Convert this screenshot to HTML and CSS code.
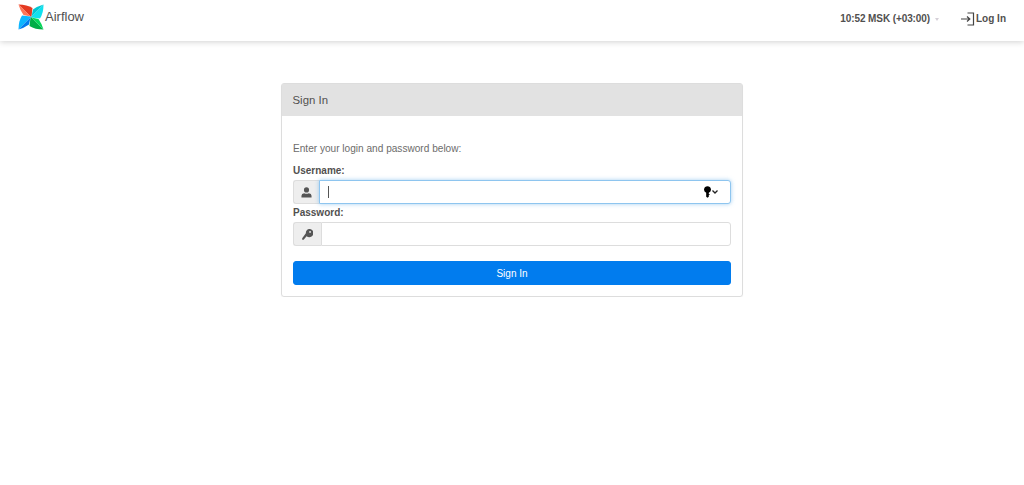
FILE: index.html
```html
<!DOCTYPE html>
<html lang="en">
<head>
    <meta charset="UTF-8">
    <meta name="viewport" content="width=device-width, initial-scale=1.0">
    <title>Airflow - Sign In</title>
    <link rel="stylesheet" href="styles.css">
</head>
<body>
    <nav class="navbar">
        <a class="brand" href="#">
            <svg class="brand-logo" viewBox="0 0 26 26" width="26" height="26">
                <g>
                    <path fill="#e43921" d="M13 13 L0.500 0.500 Q9 0.500 14.500 4 L13.500 12.500 Z"/>
                    <path fill="#ff7557" d="M12.500 12.500 L5.500 11 Q2 6 0.500 0.500 Z"/>
                </g>
                <g transform="rotate(90 13 13)">
                    <path fill="#11e1ee" d="M13 13 L0.500 0.500 Q9 0.500 14.500 4 L13.500 12.500 Z"/>
                    <path fill="#00c7d4" d="M12.500 12.500 L5.500 11 Q2 6 0.500 0.500 Z"/>
                </g>
                <g transform="rotate(180 13 13)">
                    <path fill="#00ad46" d="M13 13 L0.500 0.500 Q9 0.500 14.500 4 L13.500 12.500 Z"/>
                    <path fill="#04d659" d="M12.500 12.500 L5.500 11 Q2 6 0.500 0.500 Z"/>
                </g>
                <g transform="rotate(270 13 13)">
                    <path fill="#0cb6ff" d="M13 13 L0.500 0.500 Q9 0.500 14.500 4 L13.500 12.500 Z"/>
                    <path fill="#017cee" d="M12.500 12.500 L5.500 11 Q2 6 0.500 0.500 Z"/>
                </g>
            </svg>
            <span class="brand-name">Airflow</span>
        </a>
        <div class="nav-right">
            <span class="clock">10:52 MSK (+03:00)</span>
            <span class="caret-down"></span>
            <a class="login-link" href="#">
                <svg viewBox="0 0 14 14" width="14" height="14" fill="none" stroke="#444" stroke-width="1.2">
                    <path d="M0 7 H8.500 M6 4.500 L8.800 7 L6 9.500"/>
                    <path d="M6.500 1 H12.500 V13 H6.500"/>
                </svg>
                <span>Log In</span>
            </a>
        </div>
    </nav>

    <main class="container">
        <section class="panel">
            <div class="panel-heading">Sign In</div>
            <form class="panel-body">
                <p class="intro">Enter your login and password below:</p>
                <label class="field-label" for="username">Username:</label>
                <div class="input-group">
                    <span class="addon">
                        <svg viewBox="0 0 12 12" width="11" height="11" fill="#555">
                            <circle cx="6" cy="3.200" r="2.800"/>
                            <path d="M0.500 11.500 V9.500 Q0.500 7.200 3.500 6.800 Q6 8 8.500 6.800 Q11.500 7.200 11.500 9.500 V11.500 Z"/>
                        </svg>
                    </span>
                    <input class="text-input focused" type="text" id="username">
                    <span class="text-caret"></span>
                    <span class="key-hint">
                        <svg viewBox="0 0 8 13" width="7" height="12" fill="#000">
                            <path d="M4 0 A4 3.800 0 0 1 5.500 7.300 V9 H6.500 V10 H5.500 V12 L4 13 L2.500 12 V7.300 A4 3.800 0 0 1 4 0 Z"/>
                        </svg>
                        <svg viewBox="0 0 6 4" width="6" height="4" fill="none" stroke="#222" stroke-width="1.300">
                            <path d="M0.500 0.500 L3 3 L5.500 0.500"/>
                        </svg>
                    </span>
                </div>
                <label class="field-label" for="password">Password:</label>
                <div class="input-group">
                    <span class="addon addon-wide">
                        <svg viewBox="0 0 12 12" width="11" height="11" fill="#555">
                            <path d="M7.500 0 A4.500 4.500 0 1 1 5 7.800 L1.800 11.800 L0.200 11.800 L0.200 10 L4.200 4.500 A4.500 4.500 0 0 1 7.500 0 Z"/>
                            <circle cx="8.800" cy="3.200" r="1" fill="#eee"/>
                        </svg>
                    </span>
                    <input class="text-input" type="password" id="password">
                </div>
                <button class="btn-primary" type="button">Sign In</button>
            </form>
        </section>
    </main>
</body>
</html>
```

FILE: styles.css
```css
body {
    margin: 0;
    font-family: "Liberation Sans", Arial, sans-serif;
    font-size: 10px;
    color: #51504f;
    background: #fff;
}

a {
    color: inherit;
    text-decoration: none;
}

.navbar {
    height: 41px;
    box-sizing: border-box;
    padding: 4px 18px 0 18px;
    display: flex;
    justify-content: space-between;
    background: #fff;
    box-shadow: 0 1px 6px rgba(0, 0, 0, 0.18);
}

.brand {
    display: flex;
    align-items: flex-start;
    gap: 1px;
}

.brand-logo {
    display: block;
}

.brand-name {
    font-size: 13px;
    line-height: 26px;
    color: #51504f;
}

.nav-right {
    display: flex;
    align-items: center;
    height: 29px;
    font-weight: bold;
    font-size: 10px;
    color: #51504f;
}

.clock {
    margin-right: 5px;
    letter-spacing: -0.1px;
}

.caret-down {
    width: 0;
    height: 0;
    margin-right: 22px;
    margin-top: 2px;
    border-left: 2.500px solid transparent;
    border-right: 2.500px solid transparent;
    border-top: 3px solid #d5d0d8;
}

.login-link {
    display: flex;
    align-items: center;
    gap: 1px;
}

.container {
    width: 462px;
    margin: 42px auto 0;
}

.panel {
    height: 214px;
    box-sizing: border-box;
    border: 1px solid #ddd;
    border-radius: 3px;
    box-shadow: 0 1px 1px rgba(0, 0, 0, 0.05);
}

.panel-heading {
    height: 32px;
    box-sizing: border-box;
    padding-left: 10.500px;
    line-height: 32px;
    font-size: 11.400px;
    background: #e2e2e2;
    color: #51504f;
}

.panel-body {
    display: flex;
    flex-direction: column;
    padding: 26px 11px 0;
}

.intro {
    margin: 0 0 9px;
    font-size: 10.100px;
    line-height: 13px;
    color: #6d6c6b;
}

.field-label {
    display: block;
    font-weight: bold;
    font-size: 10px;
    line-height: 13px;
    margin-bottom: 3px;
    color: #51504f;
}

.input-group {
    position: relative;
    display: flex;
    height: 24px;
}

.input-group + .field-label {
    margin-top: 2px;
}

.addon {
    width: 26px;
    box-sizing: border-box;
    display: flex;
    align-items: center;
    justify-content: center;
    background: #eee;
    border: 1px solid #ddd;
    border-right: 0;
    border-radius: 3px 0 0 3px;
}

.addon-wide {
    width: 28px;
}

.text-input {
    flex: 1;
    min-width: 0;
    box-sizing: border-box;
    padding: 0 8px;
    border: 1px solid #ddd;
    border-radius: 0 3px 3px 0;
    outline: none;
    background: #fff;
}

.text-input.focused {
    border-color: #8ec5ef;
    box-shadow: 0 0 4px rgba(102, 175, 233, 0.6);
}

.text-caret {
    position: absolute;
    left: 35px;
    top: 6px;
    width: 1px;
    height: 12px;
    background: #555;
}

.key-hint {
    position: absolute;
    right: 13px;
    top: 6px;
    display: flex;
    align-items: center;
    gap: 1px;
}

.btn-primary {
    height: 24px;
    margin-top: 15px;
    padding: 0;
    border: 1px solid #017cee;
    border-radius: 3px;
    background: #017cee;
    color: #fff;
    font-family: inherit;
    font-size: 10px;
}
```
